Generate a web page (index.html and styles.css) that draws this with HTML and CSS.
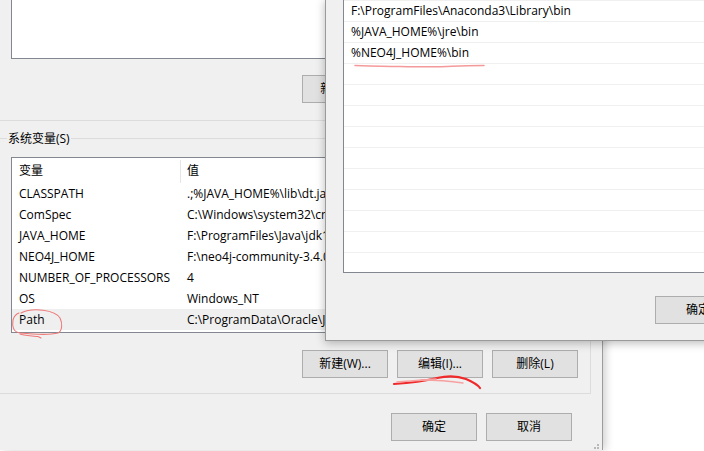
FILE: index.html
```html
<!DOCTYPE html>
<html lang="zh-CN">
<head>
<meta charset="utf-8">
<title>环境变量</title>
<link rel="stylesheet" href="styles.css">
</head>
<body>
<div class="stage">
  <div class="env-dialog">
    <div class="user-list"></div>
    <div class="btn-row user-btns">
      <button class="btn">新建(N)...</button>
      <button class="btn">编辑(E)...</button>
      <button class="btn">删除(D)</button>
    </div>
    <div class="divider"></div>
    <div class="group">
      <div class="group-title">系统变量(S)</div>
      <div class="listview">
        <div class="lv-head"><span class="c1">变量</span><span class="c2 head-c2">值</span></div>
        <div class="lv-row"><span class="c1">CLASSPATH</span><span class="c2">.;%JAVA_HOME%\lib\dt.jar;%JAVA_HOME%\lib\tools.jar</span></div>
        <div class="lv-row"><span class="c1">ComSpec</span><span class="c2">C:\Windows\system32\cmd.exe</span></div>
        <div class="lv-row"><span class="c1">JAVA_HOME</span><span class="c2">F:\ProgramFiles\Java\jdk1.8.0</span></div>
        <div class="lv-row"><span class="c1">NEO4J_HOME</span><span class="c2">F:\neo4j-community-3.4.0</span></div>
        <div class="lv-row"><span class="c1">NUMBER_OF_PROCESSORS</span><span class="c2">4</span></div>
        <div class="lv-row"><span class="c1">OS</span><span class="c2">Windows_NT</span></div>
        <div class="lv-row selected"><span class="c1">Path</span><span class="c2">C:\ProgramData\Oracle\Java\javapath</span></div>
      </div>
      <div class="btn-row group-btns">
        <button class="btn">新建(W)...</button>
        <button class="btn">编辑(I)...</button>
        <button class="btn">删除(L)</button>
      </div>
    </div>
    <div class="btn-row footer-btns">
      <button class="btn">确定</button>
      <button class="btn">取消</button>
    </div>
    <svg class="grip" width="9" height="6" viewBox="0 0 9 6"><rect x="6" y="0" width="2" height="2" fill="#b8b8b8"/><rect x="3" y="3" width="2" height="2" fill="#b8b8b8"/><rect x="6" y="3" width="2" height="2" fill="#b8b8b8"/></svg>
  </div>

  <div class="edit-dialog">
    <div class="path-list">
      <div class="path-row">F:\ProgramFiles\Anaconda3\Library\bin</div>
      <div class="path-row">%JAVA_HOME%\jre\bin</div>
      <div class="path-row">%NEO4J_HOME%\bin</div>
      <div class="path-row"></div>
      <div class="path-row"></div>
      <div class="path-row"></div>
      <div class="path-row"></div>
      <div class="path-row"></div>
      <div class="path-row"></div>
      <div class="path-row"></div>
      <div class="path-row"></div>
      <div class="path-row"></div>
      <div class="path-row"></div>
    </div>
    <div class="edit-footer">
      <button class="btn">确定</button>
    </div>
  </div>

  <svg class="ink" width="704" height="451" viewBox="0 0 704 451">
    <path d="M355,65.5 C370,66 385,66.5 400,66.5 C415,66.8 440,67 452,66.2 C465,65.6 475,65.5 484,65.5" fill="none" stroke="#f49a9a" stroke-width="1.6" stroke-linecap="round"/>
    <path d="M21,313 C33,307 55,310 60,318 C63,324 62,331 58,333 C50,335 30,334 20,333 C13,332 12,326 13,320 C14,316 16,314 19,313" fill="none" stroke="#f07878" stroke-width="1.1" stroke-linecap="round"/>
    <path d="M20,334 C26,336 33,336 38,336.5 L41,338" fill="none" stroke="#f07878" stroke-width="1.1" stroke-linecap="round"/>
    <path d="M394,384 C410,383 425,381 437,378 C448,375.5 458,376 466,379 C473,382 478,385 480,388" fill="none" stroke="#f02a2a" stroke-width="2.2" stroke-linecap="round"/>
    <path d="M397,382 C410,381 425,380 436,379" fill="none" stroke="#f7a0a0" stroke-width="1.6" stroke-linecap="round"/>
    <path d="M421,380 C435,380 450,381 463,383" fill="none" stroke="#f7a0a0" stroke-width="1.4" stroke-linecap="round"/>
  </svg>
</div>
</body>
</html>
```

FILE: styles.css
```css
* {
  box-sizing: border-box;
}

html, body {
  margin: 0;
  padding: 0;
  background: #ffffff;
}

body {
  font-family: "Open Sans", "Noto Sans CJK SC", sans-serif;
  font-size: 12px;
  color: #000000;
  overflow: hidden;
}

.stage {
  position: relative;
  width: 704px;
  height: 451px;
  overflow: hidden;
}

.env-dialog {
  position: relative;
  width: 603px;
  height: 451px;
  background: #f0f0f0;
  border-right: 1px solid #9c9c9c;
  box-shadow: 3px 0 8px rgba(0, 0, 0, 0.18);
}

.user-list {
  margin-top: -1px;
  margin-left: 11px;
  width: 580px;
  height: 60px;
  background: #ffffff;
  border: 1px solid #828790;
}

.btn-row {
  display: flex;
  gap: 9px;
}

.btn {
  width: 86px;
  height: 28px;
  padding: 0;
  background: #e1e1e1;
  border: 1px solid #adadad;
  font-family: "Open Sans", "Noto Sans CJK SC", sans-serif;
  font-size: 12px;
  color: #000000;
  line-height: 24px;
  text-align: center;
  white-space: nowrap;
}

.user-btns {
  margin-top: 16px;
  padding-left: 302px;
}

.divider {
  margin-top: 17px;
  height: 1px;
  background: #dcdcdc;
}

.group {
  margin-top: 17px;
  margin-left: -10px;
  width: 601px;
  border: 1px solid #dcdcdc;
}

.group-title {
  display: table;
  margin-top: -9px;
  margin-left: 16px;
  padding: 0 1px;
  height: 18px;
  line-height: 18px;
  background: #f0f0f0;
}

.listview {
  margin-top: 9px;
  margin-left: 20px;
  width: 568px;
  height: 176px;
  background: #ffffff;
  border: 1px solid #828790;
  overflow: hidden;
}

.lv-head {
  display: flex;
  height: 25px;
  line-height: 25px;
}

.lv-row {
  display: flex;
  height: 21px;
  line-height: 21px;
}

.lv-row.selected {
  background: #efefef;
}

.c1 {
  width: 168px;
  padding-left: 7px;
  white-space: nowrap;
  overflow: hidden;
}

.c2 {
  flex: 1;
  padding-left: 7px;
  white-space: nowrap;
  overflow: hidden;
}

.head-c2 {
  border-left: 1px solid #e5e5e5;
  padding-left: 6px;
  margin-top: 2px;
  margin-bottom: 0;
  line-height: 21px;
}

.group-btns {
  margin-top: 17px;
  margin-bottom: 15px;
  padding-left: 311px;
}

.footer-btns {
  margin-top: 19px;
  padding-left: 391px;
}

.grip {
  position: absolute;
  right: 2px;
  bottom: 0;
}

.edit-dialog {
  position: absolute;
  left: 325px;
  top: -1px;
  width: 420px;
  height: 342px;
  background: #f0f0f0;
  border: 1px solid #9a9a9a;
  box-shadow: 0 2px 9px rgba(0, 0, 0, 0.28);
}

.path-list {
  margin-top: -1px;
  margin-left: 17px;
  width: 400px;
  height: 274px;
  background: #ffffff;
  border: 1px solid #828790;
  overflow: hidden;
}

.path-row {
  height: 21px;
  border-top: 1px solid #f0f0f0;
  padding-left: 7px;
  line-height: 20px;
  white-space: nowrap;
}

.edit-footer {
  display: flex;
  margin-top: 23px;
  padding-left: 329px;
}

.ink {
  position: absolute;
  left: 0;
  top: 0;
  pointer-events: none;
}
```
